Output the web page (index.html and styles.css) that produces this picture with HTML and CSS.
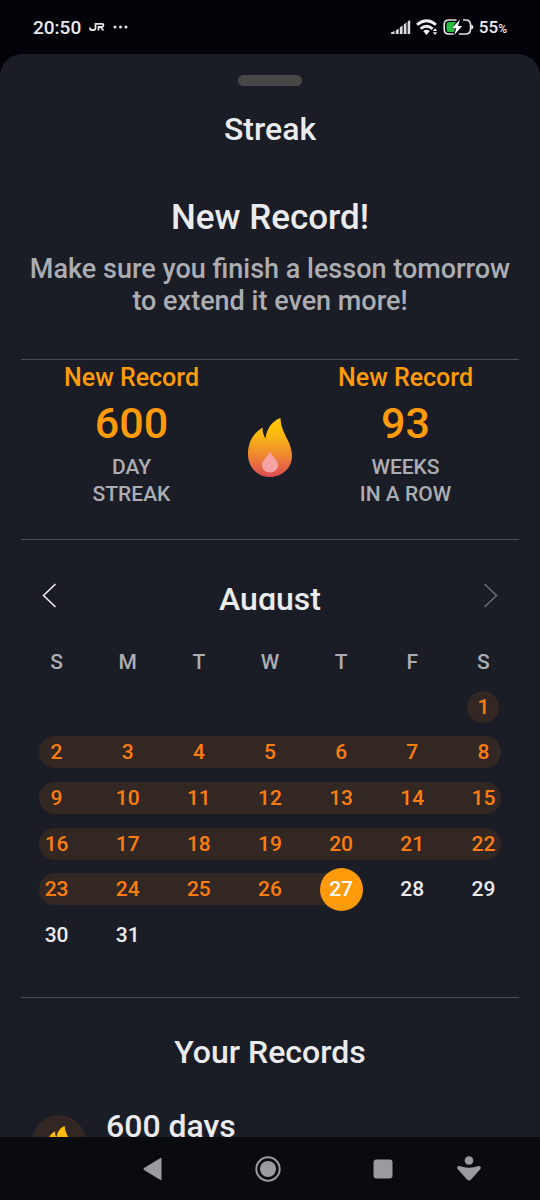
FILE: index.html
```html
<!DOCTYPE html>
<html lang="en">
<head>
<meta charset="utf-8">
<meta name="viewport" content="width=device-width, initial-scale=1">
<title>Streak</title>
<link rel="stylesheet" href="styles.css">
</head>
<body>
<svg class="defs" aria-hidden="true">
  <defs>
    <linearGradient id="fire" x1="0" y1="0" x2="0" y2="1">
      <stop offset="0" stop-color="#ffc800"/>
      <stop offset="0.3" stop-color="#fbb813"/>
      <stop offset="0.65" stop-color="#ee8432"/>
      <stop offset="1" stop-color="#de4a55"/>
    </linearGradient>
    <symbol id="flame" viewBox="0 0 44 59">
      <path fill="url(#fire)" d="M32.500 0C33 16 44 23 44 38C44 50 34 59 22 59C9 59 0 49 0 36C0 23 6 15 14.500 9.500C14.500 14 15.500 18 17.500 20.500C18.500 11 24 3 32.500 0Z"/>
      <path fill="#f5a3a3" d="M22 33.500C24 38.500 30 42 30 47C30 51.500 26.500 54.500 22 54.500C17.500 54.500 14 51.500 14 47C14 42 20 38.500 22 33.500Z"/>
    </symbol>
  </defs>
</svg>
<div class="screen">
  <header class="status">
    <div class="status-group status-left">
      <span class="clock">20:50</span>
      <svg class="brand" width="16" height="10" viewBox="0 0 16 10" role="img" aria-label="JR"><path d="M1 5.500V6Q1 8 3 8H4.500Q6.500 8 6.500 6V1.800H13Q14.500 1.800 14.500 3.300T13 5H9.500V8.500M11.500 5L14.500 8.500" fill="none" stroke="#e4e4e8" stroke-width="1.800"/></svg>
      <svg width="16" height="4" viewBox="0 0 16 4" aria-hidden="true"><g fill="#e4e4e8"><circle cx="2" cy="2" r="1.500"/><circle cx="7.500" cy="2" r="1.500"/><circle cx="13" cy="2" r="1.500"/></g></svg>
    </div>
    <div class="status-group status-right">
      <svg width="20" height="16" viewBox="0 0 20 16" aria-hidden="true"><path fill="#dcdce0" d="M0 15V13.500L3.500 12V15ZM4.800 11.500L7.600 9.500V15H4.800ZM8.800 8.500L11.600 6.500V15H8.800ZM12.800 5.500L15.400 3.500V15H12.800ZM16.600 2.500L19.200 1V15H16.600Z"/></svg>
      <svg width="22" height="16" viewBox="0 0 22 16" aria-hidden="true"><g fill="none" stroke="#eeeef0" stroke-width="2.800"><path d="M1 5.800Q10.500 -2.400 20 5.800"/><path d="M4.600 9.800Q10.500 4.800 16.600 9.800"/></g><path fill="#eeeef0" d="M7.200 12Q10.500 9.600 13.800 12L10.500 16ZM16.800 12L19 9.300L21.200 12ZM16.800 13.200H21.200L19 15.900Z"/></svg>
      <svg width="31" height="16" viewBox="0 0 31 16" aria-hidden="true"><path fill="#25bd3c" d="M5.500 3H13L8.500 9.500H12L11 13H5.500Q3.500 13 3.500 11V5Q3.500 3 5.500 3Z"/><path fill="none" stroke="#e4e4e8" stroke-width="1.600" d="M13.500 1H6Q1.200 1 1.200 5.500V10.500Q1.200 15 6 15H10.500M20 1H22.500Q27.500 1 27.500 5.500V10.500Q27.500 15 22.500 15H16"/><path fill="#fff" d="M17 .5L8.800 9.200H13.200L11.200 16L19.200 7H15ZM28.300 5.500Q30.300 6 30.300 8T28.300 10.500Z"/></svg>
      <span class="battery">55<small>%</small></span>
    </div>
  </header>

  <main class="sheet">
    <div class="handle"></div>
    <h1 class="title">Streak</h1>
    <h2 class="headline">New Record!</h2>
    <p class="message">Make sure you finish a lesson tomorrow to extend it even more!</p>

    <section class="stats">
      <div class="stat">
        <p class="stat-badge">New Record</p>
        <p class="stat-value">600</p>
        <p class="stat-label">DAY<br>STREAK</p>
      </div>
      <svg class="stat-flame" width="44" height="59" aria-hidden="true"><use href="#flame"/></svg>
      <div class="stat">
        <p class="stat-badge">New Record</p>
        <p class="stat-value">93</p>
        <p class="stat-label">WEEKS<br>IN A ROW</p>
      </div>
    </section>

    <section class="calendar">
      <div class="month-bar">
        <button class="month-button" type="button" aria-label="Previous month"><svg width="15" height="25" viewBox="0 0 15 25"><path d="M13.500 1L1.500 12.500L13.500 24"/></svg></button>
        <h2 class="month">August</h2>
        <button class="month-button" type="button" aria-label="Next month" disabled><svg width="15" height="25" viewBox="0 0 15 25"><path d="M1.500 1L13.500 12.500L1.500 24"/></svg></button>
      </div>
      <table class="days">
        <thead>
          <tr><th scope="col">S</th><th scope="col">M</th><th scope="col">T</th><th scope="col">W</th><th scope="col">T</th><th scope="col">F</th><th scope="col">S</th></tr>
        </thead>
        <tbody>
          <tr><td></td><td></td><td></td><td></td><td></td><td></td><td><span class="hit single">1</span></td></tr>
          <tr><td><span class="hit start">2</span></td><td><span class="hit">3</span></td><td><span class="hit">4</span></td><td><span class="hit">5</span></td><td><span class="hit">6</span></td><td><span class="hit">7</span></td><td><span class="hit end">8</span></td></tr>
          <tr><td><span class="hit start">9</span></td><td><span class="hit">10</span></td><td><span class="hit">11</span></td><td><span class="hit">12</span></td><td><span class="hit">13</span></td><td><span class="hit">14</span></td><td><span class="hit end">15</span></td></tr>
          <tr><td><span class="hit start">16</span></td><td><span class="hit">17</span></td><td><span class="hit">18</span></td><td><span class="hit">19</span></td><td><span class="hit">20</span></td><td><span class="hit">21</span></td><td><span class="hit end">22</span></td></tr>
          <tr><td><span class="hit start">23</span></td><td><span class="hit">24</span></td><td><span class="hit">25</span></td><td><span class="hit">26</span></td><td><span class="today"><span class="today-dot">27</span></span></td><td>28</td><td>29</td></tr>
          <tr><td>30</td><td>31</td><td></td><td></td><td></td><td></td><td></td></tr>
        </tbody>
      </table>
    </section>

    <section class="records">
      <h2 class="records-title">Your Records</h2>
      <div class="record">
        <span class="record-icon"><svg width="24" height="32" aria-hidden="true"><use href="#flame"/></svg></span>
        <span class="record-value">600 days</span>
      </div>
    </section>
  </main>

  <nav class="system-nav">
    <button type="button" aria-label="Back"><svg width="26" height="26" viewBox="0 0 26 26"><path d="M21.500 2.500V23.500Q21.500 24.500 20.500 24L4 14Q3 13 4 12L20.500 2Q21.500 1.500 21.500 2.500Z"/></svg></button>
    <button type="button" aria-label="Home"><svg width="26" height="26" viewBox="0 0 26 26"><circle cx="13" cy="13" r="8"/><circle cx="13" cy="13" r="11.700" fill="none" stroke="#9b9b9e" stroke-width="2"/></svg></button>
    <button type="button" aria-label="Recent apps"><svg width="26" height="26" viewBox="0 0 26 26"><rect x="3.500" y="3.500" width="19" height="19" rx="3"/></svg></button>
    <button type="button" aria-label="Accessibility"><svg width="26" height="26" viewBox="0 0 26 26"><circle cx="13" cy="4.500" r="4.300"/><path d="M3.500 10Q13 13.500 22.500 10Q24.500 9.500 24.800 11.500Q24.800 12.500 24 13.500L15 23.500Q13 25.500 11 23.500L2 13.500Q1.200 12.500 1.200 11.500Q1.500 9.500 3.500 10Z"/></svg></button>
  </nav>
</div>
</body>
</html>
```
FILE: styles.css
```css
:root {
  --page: #020208;
  --sheet: #1b1d26;
  --text: #ebebee;
  --muted: #acadb2;
  --line: #4b4d53;
  --orange: #ff9b0a;
  --hit-text: #fb7d12;
  --hit: #332724;
}

* {
  box-sizing: border-box;
}

body {
  margin: 0;
  background: var(--page);
  color: var(--text);
  font-family: Roboto, "Liberation Sans", sans-serif;
  font-weight: 500;
}

h1, h2, p {
  margin: 0;
  font-weight: 500;
  text-align: center;
}

button {
  padding: 0;
  border: 0;
  background: none;
}

svg {
  display: block;
}

.defs {
  position: absolute;
  width: 0;
  height: 0;
}

.screen {
  display: flex;
  flex-direction: column;
  height: 100vh;
}

/* Status bar */
.status {
  display: flex;
  flex: none;
  align-items: center;
  justify-content: space-between;
  height: 54px;
  padding: 0 33px;
}

.status-group {
  display: flex;
  align-items: center;
}

.status-left {
  gap: 8px;
}

.status-right {
  gap: 5px;
}

.clock {
  font-size: 19px;
}

.battery {
  font-size: 17px;
}

.battery small {
  font-size: 12px;
}

/* Sheet */
.sheet {
  flex: 1;
  min-height: 0;
  overflow: hidden;
  padding: 21px 21px 0;
  border-radius: 22px 22px 0 0;
  background: var(--sheet);
}

.handle {
  width: 64px;
  height: 11px;
  margin: 0 auto;
  border-radius: 6px;
  background: #474747;
}

.title {
  margin-top: 25px;
  font-size: 32px;
  line-height: 36px;
}

.headline {
  margin-top: 50px;
  font-size: 35px;
  line-height: 42px;
}

.message {
  margin-top: 14px;
  color: var(--muted);
  font-size: 27px;
  line-height: 32px;
}

/* Stats */
.stats {
  display: grid;
  grid-template-columns: 221fr 50fr 227fr;
  margin-top: 42px;
  padding: 3px 0 31px;
  border-top: 1px solid var(--line);
  border-bottom: 1px solid var(--line);
}

.stat-badge {
  color: var(--orange);
  font-size: 25px;
  line-height: 30px;
}

.stat-value {
  margin-top: 5px;
  color: var(--orange);
  font-size: 43px;
  line-height: 50px;
}

.stat-label {
  margin-top: 6px;
  color: var(--muted);
  font-size: 21px;
  line-height: 27px;
}

.stat-flame {
  margin-top: 55px;
  justify-self: end;
}

/* Calendar */
.calendar {
  padding: 41px 0 39px;
  border-bottom: 1px solid var(--line);
}

.month-bar {
  display: flex;
  align-items: center;
  justify-content: space-between;
  padding: 0 21px;
}

.month {
  height: 29px;
  overflow: hidden;
  font-size: 32px;
  line-height: 36px;
}

.month-button svg {
  fill: none;
  stroke: #f4f4f6;
  stroke-width: 1.500;
}

.month-button:disabled svg {
  stroke: #6c6e74;
}

.days {
  width: 100%;
  height: 319px;
  margin-top: 29px;
  border-collapse: collapse;
  table-layout: fixed;
  font-size: 21px;
  line-height: 32px;
  text-align: center;
}

.days th,
.days td {
  height: 45px;
  padding: 0;
  font-weight: 500;
}

.days th {
  color: var(--muted);
}

.hit {
  display: block;
  background: var(--hit);
  color: var(--hit-text);
}

.start {
  margin-left: 18px;
  padding-right: 18px;
  border-radius: 16px 0 0 16px;
}

.end {
  margin-right: 18px;
  padding-left: 18px;
  border-radius: 0 16px 16px 0;
}

.single {
  width: 32px;
  margin: 0 auto;
  border-radius: 50%;
}

.today {
  display: block;
  background: linear-gradient(var(--hit), var(--hit)) no-repeat left center / 50% 32px;
}

.today-dot {
  display: block;
  width: 43px;
  margin: 0 auto;
  border-radius: 50%;
  background: var(--orange);
  color: #fff;
  line-height: 43px;
}

/* Records */
.records {
  padding-top: 36px;
}

.records-title {
  font-size: 32px;
  line-height: 36px;
}

.record {
  display: flex;
  gap: 20px;
  margin-top: 38px;
  padding-left: 11px;
}

.record-icon {
  display: grid;
  flex: none;
  place-items: center;
  width: 54px;
  height: 54px;
  margin-top: 7px;
  border-radius: 50%;
  background: var(--hit);
}

.record-value {
  font-size: 32px;
  line-height: 36px;
}

/* System navigation */
.system-nav {
  display: grid;
  flex: none;
  grid-template-columns: repeat(3, 115fr) 57fr;
  align-items: center;
  height: 63px;
  padding: 0 43px 0 95px;
  background: #0a0b0f;
}

.system-nav button {
  justify-self: center;
}

.system-nav svg {
  fill: #9b9b9e;
}
```
